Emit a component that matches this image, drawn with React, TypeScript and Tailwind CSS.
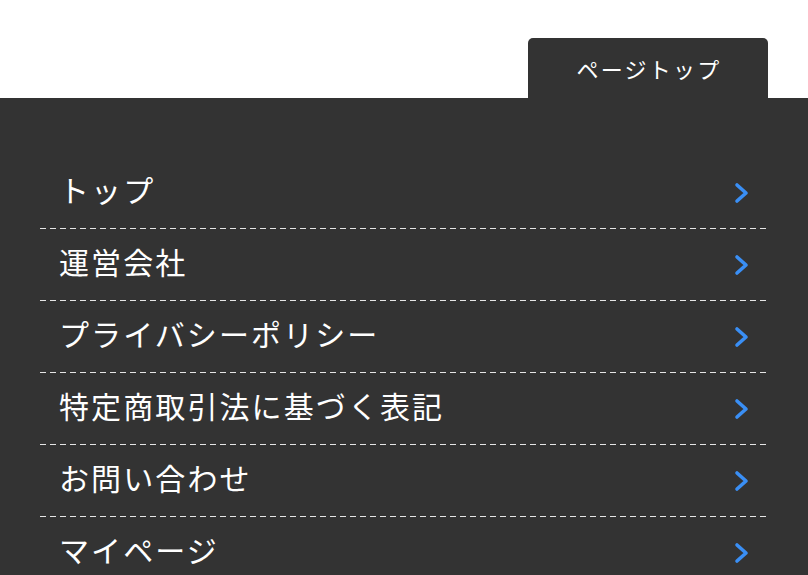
import React from "react";

const items = [
  "トップ",
  "運営会社",
  "プライバシーポリシー",
  "特定商取引法に基づく表記",
  "お問い合わせ",
  "マイページ",
];

const Chevron = () => (
  <svg width="16" height="22" viewBox="0 0 16 22" className="shrink-0">
    <polyline
      points="3,3 12,11 3,19"
      fill="none"
      stroke="#3a8ff5"
      strokeWidth="3.6"
      strokeLinecap="round"
      strokeLinejoin="round"
    />
  </svg>
);

export default function App() {
  return (
    <div
      className="w-[808px] h-[575px] overflow-hidden bg-white"
      style={{ fontFamily: '"Noto Sans CJK JP", "Noto Sans", sans-serif' }}
    >
      {/* page top tab */}
      <div className="flex justify-end pr-[40px] pt-[38px]">
        <a className="flex h-[60px] w-[240px] items-center justify-center rounded-t-[5px] bg-[#333333] pl-[2px] text-[22px] tracking-[0.1em] text-white">
          ページトップ
        </a>
      </div>

      {/* footer nav */}
      <footer className="bg-[#333333] px-[40px] pt-[59px]">
        <ul>
          {items.map((label) => (
            <li key={label}>
              <a className="flex h-[71px] items-center justify-between pl-[19px] pr-[18px] text-white">
                <span className="pb-[8px] text-[30px] leading-none tracking-[0.07em]">{label}</span>
                <Chevron />
              </a>
              <div className="h-px bg-[linear-gradient(to_right,#e6e6e6_60%,transparent_60%)] bg-[length:10px_1px] bg-repeat-x" />
            </li>
          ))}
        </ul>
      </footer>
    </div>
  );
}
